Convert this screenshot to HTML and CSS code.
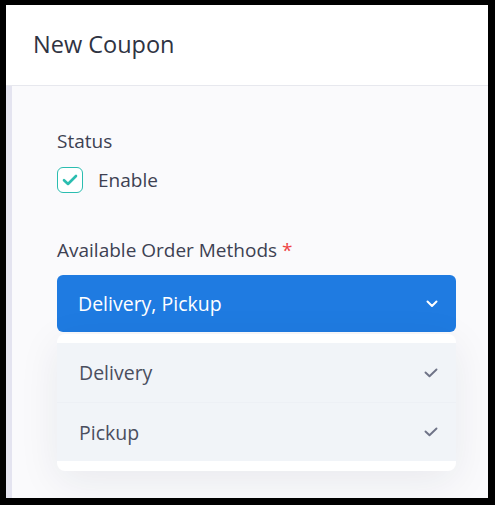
FILE: index.html
```html
<!DOCTYPE html>
<html lang="en">
<head>
  <meta charset="UTF-8">
  <meta name="viewport" content="width=device-width, initial-scale=1.0">
  <title>New Coupon</title>
  <link rel="stylesheet" href="styles.css">
</head>
<body>
  <div class="frame">
    <header class="top">New Coupon</header>
    <div class="page">
      <div class="stripe"></div>
      <main class="content">
        <section class="field">
          <div class="label">Status</div>
          <label class="check">
            <span class="box">
              <svg width="16" height="12" viewBox="0 0 16 12"><path d="M2 6.2 L6 10 L14 2" fill="none" stroke="#2bbdb0" stroke-width="2.6" stroke-linecap="round" stroke-linejoin="round"/></svg>
            </span>
            <span>Enable</span>
          </label>
        </section>

        <section class="field methods">
          <div class="label">Available Order Methods <span class="req">*</span></div>
          <div class="select">
            <span>Delivery, Pickup</span>
            <svg width="12" height="8" viewBox="0 0 12 8"><path d="M1.5 1.5 L6 6 L10.5 1.5" fill="none" stroke="#fff" stroke-width="2" stroke-linecap="round" stroke-linejoin="round"/></svg>
          </div>
          <div class="menu">
            <ul class="options">
              <li class="option">
                <span>Delivery</span>
                <svg width="14" height="10" viewBox="0 0 14 10"><path d="M1.5 4.5 L5.5 8.3 L12.5 1.5" fill="none" stroke="#6f7387" stroke-width="1.9" stroke-linecap="round" stroke-linejoin="round"/></svg>
              </li>
              <li class="option">
                <span>Pickup</span>
                <svg width="14" height="10" viewBox="0 0 14 10"><path d="M1.5 4.5 L5.5 8.3 L12.5 1.5" fill="none" stroke="#6f7387" stroke-width="1.9" stroke-linecap="round" stroke-linejoin="round"/></svg>
              </li>
            </ul>
          </div>
        </section>
      </main>
    </div>
  </div>
</body>
</html>
```

FILE: styles.css
```css
* {
  box-sizing: border-box;
}

body {
  margin: 0;
  background-color: #000;
  font-family: 'Open Sans', sans-serif;
  color: #3d4152;
}

.frame {
  width: 482px;
  height: 493px;
  margin: 5px 0 0 6px;
  background-color: #fafafc;
  display: flex;
  flex-direction: column;
  overflow: hidden;
}

.top {
  height: 81px;
  flex-shrink: 0;
  background-color: #fff;
  border-bottom: 1px solid #e7e8ee;
  padding: 0 0 2px 27px;
  display: flex;
  align-items: center;
  font-size: 23.5px;
  color: #2f3342;
}

.page {
  flex: 1;
  display: flex;
}

.stripe {
  width: 6px;
  background-color: #e4e4f0;
}

.content {
  flex: 1;
  padding: 43px 32px 0 45px;
}

.label {
  font-size: 19px;
  line-height: 24px;
}

.req {
  color: #ef4444;
}

.check {
  display: flex;
  align-items: center;
  gap: 15px;
  margin-top: 14px;
  font-size: 19px;
}

.box {
  width: 26px;
  height: 26px;
  border: 1.5px solid #2bbdb0;
  border-radius: 6px;
  background-color: #fff;
  display: flex;
  align-items: center;
  justify-content: center;
}

.methods {
  margin-top: 45px;
}

.select {
  margin-top: 13px;
  height: 57px;
  border-radius: 6px;
  background-color: #1f7be1;
  color: #fff;
  font-size: 19.5px;
  display: flex;
  align-items: center;
  justify-content: space-between;
  padding: 0 18px 0 21px;
}

.menu {
  margin-top: 2px;
  background-color: #fff;
  border-radius: 8px;
  padding: 9px 0 10px;
  box-shadow: 0 10px 40px rgba(30, 35, 60, 0.08);
}

.options {
  list-style: none;
  margin: 0;
  padding: 0;
  background-color: #f1f4f8;
}

.option {
  height: 59px;
  display: flex;
  align-items: center;
  justify-content: space-between;
  padding: 0 18px 0 22px;
  font-size: 19.5px;
  color: #4a4e5e;
}

.option + .option {
  border-top: 1px solid #edf0f5;
}
```
